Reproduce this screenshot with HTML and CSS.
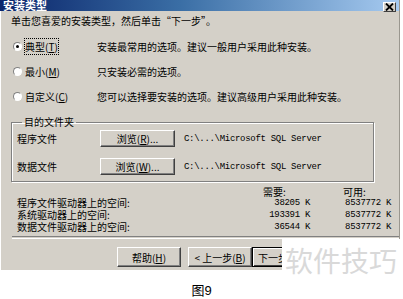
FILE: index.html
```html
<!DOCTYPE html>
<html lang="zh-CN">
<head>
  <meta charset="utf-8"/>
  <title>安装类型</title>
  <link rel="stylesheet" href="styles.css">
</head>
<body>
  <div class="window">
    <div class="titlebar">
      <span class="title">安装类型</span>
      <span class="close">
        <svg width="9" height="8" viewBox="0 0 9 8"><path d="M1 0.5 L8 7.5 M8 0.5 L1 7.5" stroke="#000" stroke-width="1.8"/></svg>
      </span>
    </div>

    <p class="intro">单击您喜爱的安装类型，然后单击“下一步”。</p>

    <!-- 安装类型选项 -->
    <div class="options">
      <div class="opt">
        <span class="radio on"></span>
        <span class="lbl"><span class="focus">典型(<u>T</u>)</span></span>
        <span class="desc">安装最常用的选项。建议一般用户采用此种安装。</span>
      </div>
      <div class="opt">
        <span class="radio"></span>
        <span class="lbl">最小(<u>M</u>)</span>
        <span class="desc">只安装必需的选项。</span>
      </div>
      <div class="opt">
        <span class="radio"></span>
        <span class="lbl">自定义(<u>C</u>)</span>
        <span class="desc">您可以选择要安装的选项。建议高级用户采用此种安装。</span>
      </div>
    </div>

    <!-- 目的文件夹 -->
    <fieldset class="group">
      <legend>目的文件夹</legend>
      <div class="row">
        <span class="name">程序文件</span>
        <button class="btn browse">浏览(<u>R</u>)...</button>
        <span class="path">C:\...\Microsoft SQL Server</span>
      </div>
      <div class="row">
        <span class="name">数据文件</span>
        <button class="btn browse">浏览(<u>W</u>)...</button>
        <span class="path">C:\...\Microsoft SQL Server</span>
      </div>
    </fieldset>

    <!-- 磁盘空间 -->
    <div class="space">
      <span></span><span class="head need">需要:</span><span class="head free">可用:</span>
      <span>程序文件驱动器上的空间:</span><span class="num">38205 K</span><span class="num">8537772 K</span>
      <span>系统驱动器上的空间:</span><span class="num">193391 K</span><span class="num">8537772 K</span>
      <span>数据文件驱动器上的空间:</span><span class="num">36544 K</span><span class="num">8537772 K</span>
    </div>

    <div class="sep"></div>

    <div class="buttons">
      <button class="btn">帮助(<u>H</u>)</button>
      <button class="btn back">&lt; 上一步(<u>B</u>)</button>
      <button class="btn default">下一步(<u>N</u>) &gt;</button>
    </div>
  </div>

  <p class="caption">图9</p>
  <div class="mark">软件技巧</div>
</body>
</html>
```

FILE: styles.css
```css
body {
  margin: 0;
  background: #fff;
  font-family: "Noto Sans CJK SC", "Noto Sans", sans-serif;
  font-size: 10px;
  color: #000;
  position: relative;
  height: 299px;
  overflow: hidden;
}
.window {
  width: 400px;
  height: 270px;
  background: #d4d0c8;
  border-right: 1px solid #9a978f;
  box-sizing: border-box;
  box-shadow: inset 1px 0 0 #fff;
}
.titlebar {
  height: 11px;
  background: linear-gradient(to right, #0a246a, #3a6ea5 45%, #a6caf0);
  display: flex;
  align-items: center;
  justify-content: space-between;
  padding: 0 3px 0 3px;
}
.title {
  color: #fff;
  font-weight: bold;
  font-size: 11px;
  line-height: 11px;
  height: 11px;
  overflow: hidden;
}
.close {
  width: 13px;
  height: 10px;
  margin-top: 2px;
  background: #d4d0c8;
  border: 1px solid;
  border-color: #fff #404040 #404040 #fff;
  box-sizing: border-box;
  display: flex;
  align-items: center;
  justify-content: center;
}

.intro {
  margin: 4px 0 0 11px;
  line-height: 12px;
}

.options {
  margin-top: 13px;
  display: flex;
  flex-direction: column;
  gap: 13px;
}
.opt {
  display: flex;
  align-items: center;
  height: 12px;
  padding-left: 13px;
}
.radio {
  width: 9px;
  height: 9px;
  border-radius: 50%;
  background: #fff;
  border: 1px solid;
  border-color: #808080 #fff #fff #808080;
  box-sizing: border-box;
  margin-right: 3px;
  position: relative;
}
.radio.on::after {
  content: "";
  position: absolute;
  left: 2px;
  top: 2px;
  width: 3px;
  height: 3px;
  border-radius: 50%;
  background: #000;
}
.lbl {
  width: 72px;
}
.focus {
  outline: 1px dotted #000;
  outline-offset: 0;
}

.group {
  margin: 15px 25px 0 11px;
  padding: 3px 5px 6px 5px;
  border: 1px solid #808080;
  box-shadow: 1px 1px 0 #fff, inset 1px 1px 0 #fff;
  display: flex;
  flex-direction: column;
  gap: 11px;
}
.group legend {
  padding: 0 2px;
  margin-left: 5px;
  line-height: 10px;
}
.row {
  display: flex;
  align-items: center;
  height: 17px;
}
.name {
  width: 83px;
}
.btn {
  font: inherit;
  font-size: 10px;
  color: #000;
  background: #d4d0c8;
  border: 1px solid;
  border-color: #fff #404040 #404040 #fff;
  box-shadow: inset -1px -1px 0 #808080;
  padding: 0;
  height: 20px;
  width: 64px;
  flex-shrink: 0;
  white-space: nowrap;
}
.browse {
  width: 75px;
  height: 17px;
  margin-right: 9px;
}
.path {
  font-family: "Liberation Mono", monospace;
  font-size: 9px;
  letter-spacing: -0.3px;
}

.space {
  margin-top: 4px;
  padding-left: 17px;
  display: grid;
  grid-template-columns: 238px 55px 81px;
  grid-template-rows: 11px 12px 12px 12px;
  align-items: center;
  line-height: 12px;
}
.head.need {
  padding-left: 8px;
}
.head.free {
  padding-left: 33px;
}
.num {
  text-align: right;
  font-family: "Liberation Mono", monospace;
  font-size: 9px;
  letter-spacing: -0.3px;
}

.sep {
  margin: 3px 0 0 12px;
  height: 1px;
  border-top: 1px solid #808080;
  border-bottom: 1px solid #fff;
}

/* the watermark covers everything right of x=282, so the row is clipped there */
.buttons {
  margin-top: 8px;
  padding-left: 117px;
  width: 165px;
  overflow: hidden;
  display: flex;
}
.buttons .back {
  margin-left: 7px;
}
.buttons .default {
  border: 1px solid #000;
  box-shadow: inset 1px 1px 0 #fff, inset -1px -1px 0 #404040;
}

.caption {
  margin: 13px 0 0;
  text-align: center;
  font-family: "Liberation Sans", "Noto Sans CJK SC", sans-serif;
  font-size: 13px;
  line-height: 15px;
}
.mark {
  position: absolute;
  left: 282px;
  top: 239px;
  width: 121px;
  height: 31px;
  padding-top: 6px;
  background: #fff;
  color: #d9d9d9;
  font-size: 28px;
  line-height: 31px;
  padding-left: 3px;
  box-sizing: content-box;
  white-space: nowrap;
}
```
